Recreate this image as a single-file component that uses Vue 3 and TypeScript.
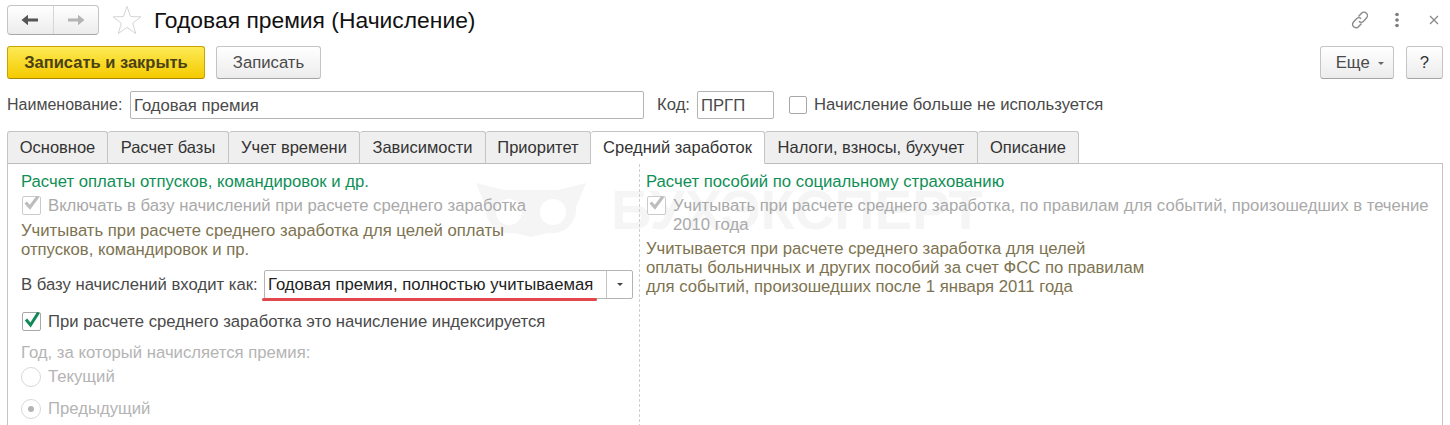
<script setup lang="ts">
const tabs = [
  { label: "Основное", width: 101 },
  { label: "Расчет базы", width: 121 },
  { label: "Учет времени", width: 131 },
  { label: "Зависимости", width: 126 },
  { label: "Приоритет", width: 105 },
  { label: "Средний заработок", width: 174 },
  { label: "Налоги, взносы, бухучет", width: 213 },
  { label: "Описание", width: 101 },
];
const activeTab = "Средний заработок";
</script>

<template>
  <div class="page">
    <header class="titlebar">
      <div class="nav">
        <button class="nav-btn">
          <svg width="18" height="12" viewBox="0 0 18 12"><path d="M0.5 6 L7 0.8 V4.4 H17 V7.6 H7 V11.2 Z" fill="#555" /></svg>
        </button>
        <button class="nav-btn">
          <svg width="18" height="12" viewBox="0 0 18 12"><path d="M17.5 6 L11 0.8 V4.4 H1 V7.6 H11 V11.2 Z" fill="#b4b4b4" /></svg>
        </button>
      </div>
      <svg class="star" width="30" height="30" viewBox="0 0 30 30">
        <path d="M15 1.5 L18.6 11.6 L29 11.8 L20.7 18.2 L23.7 28.5 L15 22.4 L6.3 28.5 L9.3 18.2 L1 11.8 L11.4 11.6 Z" fill="#fff" stroke="#cfcfcf" stroke-width="0.9" />
      </svg>
      <h1 class="title">Годовая премия (Начисление)</h1>
      <div class="win-icons">
        <svg class="i-link" width="22" height="22" viewBox="0 0 22 22" fill="none" stroke="#8a8a8a" stroke-width="1.4">
          <path d="M9.5 7.5 L12.5 4.3 a3.4 3.4 0 0 1 5 4.7 L14.5 12.2 a3.4 3.4 0 0 1 -4.6 .2" />
          <path d="M12.5 14.5 L9.5 17.7 a3.4 3.4 0 0 1 -5 -4.7 L7.5 9.8 a3.4 3.4 0 0 1 4.6 -.2" />
        </svg>
        <svg class="i-dots" width="6" height="16" viewBox="0 0 6 16" fill="#7c7c7c">
          <circle cx="3" cy="2.5" r="1.8" /><circle cx="3" cy="8" r="1.8" /><circle cx="3" cy="13.5" r="1.8" />
        </svg>
        <svg class="i-close" width="10" height="10" viewBox="0 0 10 10" stroke="#8a8a8a" stroke-width="1.3"><path d="M1 1 L9 9 M9 1 L1 9" /></svg>
      </div>
    </header>

    <div class="toolbar">
      <button class="btn primary">Записать и закрыть</button>
      <button class="btn write">Записать</button>
      <div class="spacer"></div>
      <button class="btn more">Еще <span class="caret"></span></button>
      <button class="btn help">?</button>
    </div>

    <div class="fields">
      <label class="lbl name-lbl">Наименование:</label>
      <div class="input name">Годовая премия</div>
      <label class="lbl code-lbl">Код:</label>
      <div class="input code">ПРГП</div>
      <span class="box empty"></span>
      <span class="lbl">Начисление больше не используется</span>
    </div>

    <nav class="tabs">
      <div
        v-for="t in tabs"
        :key="t.label"
        class="tab"
        :class="{ active: t.label === activeTab }"
        :style="{ width: t.width + 'px' }"
      >{{ t.label }}</div>
    </nav>

    <section class="panel">
      <div class="watermark">
        <svg width="110" height="54" viewBox="0 0 110 54">
          <path d="M0 0 L28 7 H82 L110 0 L100 24 A24 24 0 0 1 72 50 L55 54 L38 50 A24 24 0 0 1 10 24 Z" fill="#f5f5f5" />
          <circle cx="33" cy="29" r="13" fill="#fff" />
          <circle cx="77" cy="29" r="13" fill="#fff" />
        </svg>
        <span>БУХЭКСПЕРТ</span>
      </div>

      <div class="col left">
        <div class="group-title">Расчет оплаты отпусков, командировок и др.</div>
        <div class="check-row disabled">
          <span class="box off">
            <svg width="17" height="15" viewBox="0 0 16 14"><path d="M2.5 7 L6.5 11.5 L14 1.5" fill="none" stroke="#bdbdbd" stroke-width="3" /></svg>
          </span>
          <span>Включать в базу начислений при расчете среднего заработка</span>
        </div>
        <p class="note first">Учитывать при расчете среднего заработка для целей оплаты<br />отпусков, командировок и пр.</p>

        <div class="combo-row">
          <span class="lbl">В базу начислений входит как:</span>
          <div class="combo">
            <span class="combo-text">Годовая премия, полностью учитываемая</span>
            <span class="combo-btn"><span class="caret dark"></span></span>
            <span class="underline"></span>
          </div>
        </div>

        <div class="check-row on">
          <span class="box">
            <svg width="18" height="17" viewBox="0 0 18 17"><path d="M3 8.5 L7.5 14 L15.5 1.5" fill="none" stroke="#0f8a57" stroke-width="3" /></svg>
          </span>
          <span>При расчете среднего заработка это начисление индексируется</span>
        </div>

        <div class="year-title">Год, за который начисляется премия:</div>
        <div class="radio-row"><span class="radio"></span>Текущий</div>
        <div class="radio-row second"><span class="radio checked"></span>Предыдущий</div>
      </div>

      <div class="col right">
        <div class="group-title">Расчет пособий по социальному страхованию</div>
        <div class="check-row disabled top">
          <span class="box off">
            <svg width="17" height="15" viewBox="0 0 16 14"><path d="M2.5 7 L6.5 11.5 L14 1.5" fill="none" stroke="#bdbdbd" stroke-width="3" /></svg>
          </span>
          <span>Учитывать при расчете среднего заработка, по правилам для событий, произошедших в течение 2010 года</span>
        </div>
        <p class="note">Учитывается при расчете среднего заработка для целей<br />оплаты больничных и других пособий за счет ФСС по правилам<br />для событий, произошедших после 1 января 2011 года</p>
      </div>
    </section>
  </div>
</template>

<style>
html,
body {
  margin: 0;
  background: #fff;
  overflow: hidden;
}
</style>

<style scoped>
.page {
  width: 1450px;
  height: 425px;
  overflow: hidden;
  font-family: "Liberation Sans", Arial, sans-serif;
  font-size: 16.7px;
  color: #4a4a4a;
  box-sizing: border-box;
  padding: 5px 7px 0;
}

button {
  font-family: inherit;
  font-size: inherit;
  cursor: pointer;
}

.titlebar {
  display: flex;
  align-items: center;
  height: 30px;
}
.nav {
  display: flex;
  width: 92px;
  height: 30px;
  box-sizing: border-box;
  border: 1px solid #c4c4c4;
  border-bottom-color: #a8a8a8;
  border-radius: 4px;
  background: linear-gradient(#fff, #ececec);
}
.nav-btn {
  flex: 1;
  border: none;
  background: none;
  padding: 0;
  display: flex;
  align-items: center;
  justify-content: center;
}
.nav-btn + .nav-btn {
  border-left: 1px solid #d6d6d6;
}
.star {
  margin-left: 13px;
}
.title {
  margin: 0 0 0 12px;
  font-size: 22.85px;
  font-weight: 400;
  color: #111;
}
.win-icons {
  margin-left: auto;
  display: flex;
  align-items: center;
  padding-right: 4px;
}
.i-dots {
  margin-left: 23px;
}
.i-close {
  margin-left: 29px;
}

.toolbar {
  display: flex;
  align-items: center;
  margin-top: 11px;
  height: 33px;
}
.btn {
  height: 33px;
  box-sizing: border-box;
  border: 1px solid #c4c4c4;
  border-bottom-color: #a4a4a4;
  border-radius: 3px;
  background: linear-gradient(#fff, #ececec);
  color: #4a4a4a;
  padding: 0;
}
.primary {
  width: 198px;
  border-color: #c9a400;
  border-bottom-color: #a88a00;
  background: linear-gradient(#fdea55, #f5ca00);
  font-size: 16.5px;
  font-weight: 700;
  color: #4a4214;
}
.write {
  width: 105px;
  margin-left: 11px;
}
.spacer {
  flex: 1;
}
.more {
  width: 74px;
  padding-left: 6px;
}
.help {
  width: 37px;
  margin-left: 12px;
  color: #333;
}
.caret {
  display: inline-block;
  width: 0;
  height: 0;
  margin-left: 4px;
  vertical-align: middle;
  border-left: 3px solid transparent;
  border-right: 3px solid transparent;
  border-top: 3px solid #666;
}
.caret.dark {
  margin: 0;
  border-top-color: #444;
}

.fields {
  display: flex;
  align-items: center;
  margin-top: 12px;
  height: 28px;
}
.lbl {
  white-space: nowrap;
}
.name-lbl {
  width: 123px;
  font-size: 16px;
}
.input {
  height: 28px;
  box-sizing: border-box;
  border: 1px solid #b4b4b4;
  border-radius: 2px;
  line-height: 27px;
  padding-left: 3px;
}
.name {
  width: 514px;
}
.code-lbl {
  width: 40px;
  margin-left: 13px;
}
.code {
  width: 77px;
}
.box {
  flex: none;
  position: relative;
  display: inline-block;
  width: 19px;
  height: 19px;
  margin-left: 1px;
  box-sizing: border-box;
  border: 1px solid #a8a8a8;
  border-radius: 2px;
  background: #fff;
}
.box svg {
  position: absolute;
  left: 0;
  top: -2px;
}
.box.empty {
  width: 18px;
  height: 18px;
  margin: 0 7px 0 15px;
}
.box.off {
  border-color: #cbcbcb;
}

.tabs {
  display: flex;
  margin-top: 12px;
  height: 33px;
  position: relative;
  z-index: 1;
}
.tab {
  box-sizing: border-box;
  height: 33px;
  text-align: center;
  font-size: 16.5px;
  line-height: 30px;
  white-space: nowrap;
  color: #333;
  background: #efefef;
  border: 1px solid #c4c4c4;
  border-left: none;
  border-bottom-color: #bcbcbc;
  border-radius: 3px 3px 0 0;
}
.tab:first-child {
  border-left: 1px solid #c4c4c4;
}
.tab.active {
  background: #fff;
  border-bottom-color: #fff;
}

.panel {
  position: relative;
  display: flex;
  height: 300px;
  margin-top: -1px;
  box-sizing: border-box;
  border: 1px solid #c4c4c4;
}
.watermark {
  position: absolute;
  left: 468px;
  top: 19px;
  display: flex;
  align-items: center;
  gap: 25px;
  font-size: 56px;
  line-height: 54px;
  font-weight: 700;
  white-space: nowrap;
  color: #f5f5f5;
  pointer-events: none;
}
.col {
  position: relative;
  box-sizing: border-box;
  padding-top: 8px;
}
.left {
  width: 631px;
  padding-left: 13px;
  padding-right: 6px;
}
.right {
  flex: 1;
  padding-left: 6px;
  padding-right: 8px;
  border-left: 1px dashed #cfcfcf;
}
.group-title {
  color: #0f8f56;
  line-height: 19px;
}
.check-row {
  display: flex;
  align-items: center;
  gap: 7px;
  margin-top: 5px;
  line-height: 19px;
}
.check-row.top {
  align-items: flex-start;
}
.disabled {
  color: #a9a9a9;
}
.note {
  margin: 5px 0 0;
  line-height: 19px;
  color: #7d7350;
}
.note.first {
  margin-top: 6px;
}
.combo-row {
  display: flex;
  align-items: center;
  margin-top: 11px;
  height: 29px;
}
.combo {
  position: relative;
  display: flex;
  width: 369px;
  height: 29px;
  margin-left: auto;
  margin-right: 0;
  box-sizing: border-box;
  border: 1px solid #b4b4b4;
  border-radius: 2px;
  color: #222;
}
.combo-text {
  flex: 1;
  line-height: 27px;
  padding-left: 3px;
  white-space: nowrap;
}
.combo-btn {
  width: 25px;
  display: flex;
  align-items: center;
  justify-content: center;
  border-left: 1px solid #c4c4c4;
}
.underline {
  position: absolute;
  left: -3px;
  top: 27px;
  width: 335px;
  height: 3px;
  border-radius: 2px;
  background: #e2474b;
}
.check-row.on {
  margin-top: 13px;
  color: #4a4a4a;
}
.year-title {
  margin-top: 12px;
  line-height: 19px;
  color: #b4b4b4;
}
.radio-row {
  display: flex;
  align-items: center;
  gap: 7px;
  margin-top: 4px;
  line-height: 22px;
  color: #b4b4b4;
}
.radio-row.second {
  margin-top: 10px;
}
.radio {
  position: relative;
  width: 20px;
  height: 20px;
  box-sizing: border-box;
  border: 1px solid #d8d8d8;
  border-radius: 50%;
}
.radio.checked::after {
  content: "";
  position: absolute;
  left: 6px;
  top: 6px;
  width: 6px;
  height: 6px;
  border-radius: 50%;
  background: #b4b4b4;
}
</style>
